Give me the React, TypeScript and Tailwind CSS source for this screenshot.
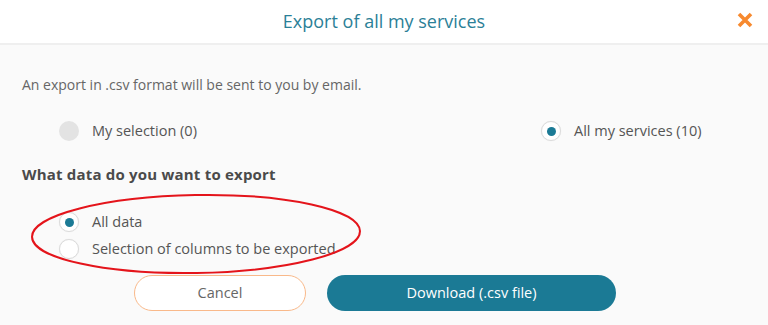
import React from 'react'

function Radio({ checked = false, disabled = false }: { checked?: boolean; disabled?: boolean }) {
  if (disabled) {
    return <span className="w-[20px] h-[20px] rounded-full bg-[#e3e3e3] shrink-0" />
  }
  return (
    <span className="w-[20px] h-[20px] rounded-full bg-white border border-[#dcdcdc] shadow-[0_0_1px_rgba(0,0,0,0.1)] flex items-center justify-center shrink-0">
      {checked && <span className="w-[9px] h-[9px] rounded-full bg-[#1b7a95]" />}
    </span>
  )
}

export default function App() {
  return (
    <div
      className="w-[768px] h-[325px] bg-[#fafafa] relative overflow-hidden"
      style={{ fontFamily: '"Open Sans", "Noto Sans", sans-serif' }}
    >
      {/* Header */}
      <div className="h-[45px] bg-white border-b-[2px] border-[#efefef] relative flex items-center justify-center">
        <h1 className="text-[18px] text-[#2b7f97]">Export of all my services</h1>
        <button className="absolute right-[14px] top-[11px] text-[#f7892e]">
          <svg width="18" height="18" viewBox="0 0 18 18">
            <path d="M3 3 L15 15 M15 3 L3 15" stroke="currentColor" strokeWidth="3.6" strokeLinecap="butt" />
          </svg>
        </button>
      </div>

      {/* Body */}
      <div className="pl-[22px] pt-[30px] text-[#555]">
        <p className="text-[14px] text-[#666] leading-[20px]">An export in .csv format will be sent to you by email.</p>

        <div className="flex items-center mt-[26px] h-[20px]">
          <label className="flex items-center gap-[13px] pl-[37px] w-[519px]">
            <Radio disabled />
            <span className="text-[14.5px] text-[#555]">My selection (0)</span>
          </label>
          <label className="flex items-center gap-[13px]">
            <Radio checked />
            <span className="text-[14.5px] text-[#555]">All my services (10)</span>
          </label>
        </div>

        <h2 className="mt-[23px] text-[15px] font-bold tracking-[0.2px] text-[#4a4a4a] leading-[20px]">What data do you want to export</h2>

        <div className="mt-[28px] pl-[37px] flex flex-col gap-[7px]">
          <label className="flex items-center gap-[13px] h-[20px]">
            <Radio checked />
            <span className="text-[14.5px] text-[#555]">All data</span>
          </label>
          <label className="flex items-center gap-[13px] h-[20px]">
            <Radio />
            <span className="text-[14.5px] text-[#555]">Selection of columns to be exported</span>
          </label>
        </div>

        <div className="mt-[16px] flex gap-[21px] pl-[112px]">
          <button className="w-[172px] h-[36px] rounded-full border border-[#f9b98a] bg-white text-[14.5px] text-[#666]">
            Cancel
          </button>
          <button className="w-[289px] h-[36px] rounded-full bg-[#1b7a95] text-[14.5px] text-white">
            Download (.csv file)
          </button>
        </div>
      </div>

      {/* Red annotation ellipse */}
      <svg className="absolute left-0 top-0 pointer-events-none" width="768" height="325">
        <ellipse cx="196" cy="234" rx="164" ry="39" fill="none" stroke="#e4141b" strokeWidth="2" transform="rotate(-1 196 234)" />
      </svg>
    </div>
  )
}
